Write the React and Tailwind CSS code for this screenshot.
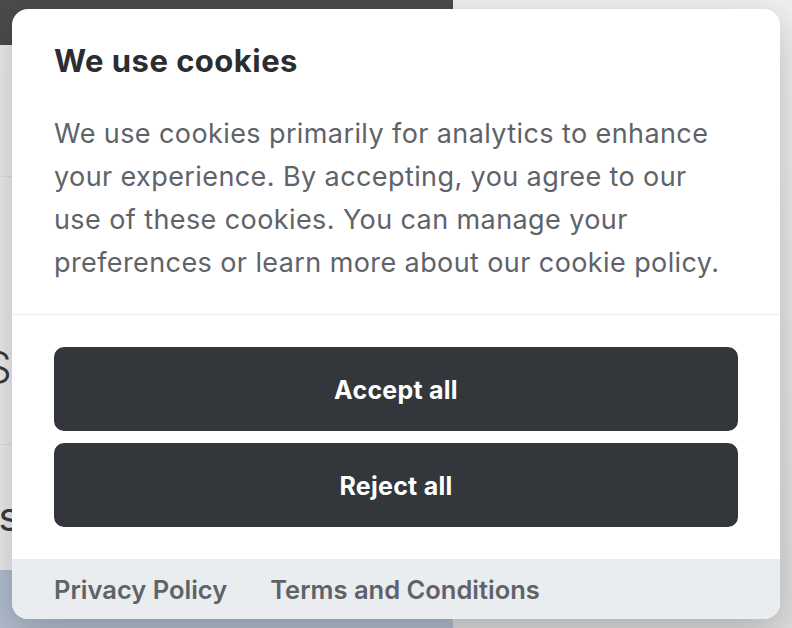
import React from "react";

const LINKS = ["Privacy Policy", "Terms and Conditions"];

const CookieModal = () => {
  return (
    <div className="absolute left-[12px] top-[9px] w-[768px] overflow-hidden rounded-[16px] bg-white shadow-[0_12px_40px_rgba(0,0,0,0.22)]">
      {/* text */}
      <div className="px-[42px] pt-[34px] pb-[30px]">
        <h2 className="mb-[33px] text-[31px] font-bold leading-[36px] tracking-[0.015em] text-[#2b2d31]">
          We use cookies
        </h2>
        <p className="text-[27px] leading-[43px] tracking-[0.015em] text-[#5f6368]">
          We use cookies primarily for analytics to enhance your experience. By
          accepting, you agree to our use of these cookies. You can manage your
          preferences or learn more about our cookie policy.
        </p>
      </div>
      {/* actions */}
      <div className="flex flex-col gap-3 border-t border-[#eceef0] px-[42px] py-[32px]">
        <button className="h-[84px] rounded-[10px] bg-[#33373c] pt-[3px] text-[25px] font-bold tracking-[0.01em] text-white">
          Accept all
        </button>
        <button className="h-[84px] rounded-[10px] bg-[#33373c] pt-[3px] text-[25px] font-bold tracking-[0.01em] text-white">
          Reject all
        </button>
      </div>
      {/* footer */}
      <div className="flex h-[60px] items-center gap-[43px] bg-[#e9edf0] px-[42px] pt-[3px]">
        {LINKS.map((l) => (
          <a key={l} className="text-[25.5px] font-semibold text-[#5f6368]">
            {l}
          </a>
        ))}
      </div>
    </div>
  );
};

const App = () => {
  return (
    <div className="relative flex h-[628px] w-[792px] overflow-hidden bg-[#e6e6e6] font-['Inter',sans-serif]">
      {/* page behind the dialog */}
      <div className="flex w-[453px] flex-col bg-[#ebebeb]">
        <div className="h-[45px] bg-[#4b4b4b]" />
        <div className="h-[132px] border-b border-[#d9dee6]" />
        <div className="h-[268px] border-b border-[#d9dee6] pt-[168px] text-[44px] font-light leading-none text-[#3a3a3a]">
          <span className="-ml-[16px]">S</span>
        </div>
        <div className="h-[125px] pt-[52px] text-[40px] leading-none text-[#3a3a3a]">
          <span className="-ml-[24px]">as</span>
        </div>
        <div className="flex-1 bg-[#b1bdce]" />
      </div>
      <div className="flex-1 bg-gradient-to-b from-[#f0f0f0] to-[#dedede]" />
      <CookieModal />
    </div>
  );
};

export default App;
